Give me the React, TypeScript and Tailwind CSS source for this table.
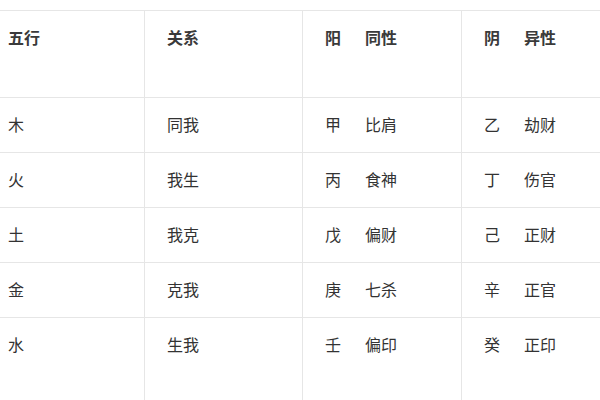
import React from "react";

const rows = [
  { el: "木", rel: "同我", yang: "甲", yangName: "比肩", yin: "乙", yinName: "劫财" },
  { el: "火", rel: "我生", yang: "丙", yangName: "食神", yin: "丁", yinName: "伤官" },
  { el: "土", rel: "我克", yang: "戊", yangName: "偏财", yin: "己", yinName: "正财" },
  { el: "金", rel: "克我", yang: "庚", yangName: "七杀", yin: "辛", yinName: "正官" },
  { el: "水", rel: "生我", yang: "壬", yangName: "偏印", yin: "癸", yinName: "正印" },
];

function Cell({ children, className = "" }: { children: React.ReactNode; className?: string }) {
  return (
    <div className={`border-r border-b border-[#e6e6e6] pl-[22px] pt-[16px] leading-[20px] ${className}`}>
      {children}
    </div>
  );
}

function Pair({ a, b }: { a: string; b: string }) {
  return (
    <div className="flex">
      <span className="w-[40px]">{a}</span>
      <span>{b}</span>
    </div>
  );
}

export default function App() {
  return (
    <div
      className="h-[400px] w-[600px] overflow-hidden bg-white text-[16px] text-[#333]"
      style={{ fontFamily: '"Noto Sans CJK SC", "Noto Sans", sans-serif' }}
    >
      <div className="mt-[10px] ml-[-14px] grid w-[636px] grid-cols-[159px_158px_159px_160px] border-t border-[#e6e6e6]">
        <Cell className="h-[87px] font-bold text-[#3a3a3a]">五行</Cell>
        <Cell className="h-[87px] font-bold text-[#3a3a3a]">关系</Cell>
        <Cell className="h-[87px] font-bold text-[#3a3a3a]">
          <Pair a="阳" b="同性" />
        </Cell>
        <Cell className="h-[87px] font-bold text-[#3a3a3a]">
          <Pair a="阴" b="异性" />
        </Cell>
        {rows.map((r, i) => {
          const h = i === rows.length - 1 ? "h-[100px]" : "h-[55px]";
          return (
            <React.Fragment key={r.el}>
              <Cell className={h}>{r.el}</Cell>
              <Cell className={h}>{r.rel}</Cell>
              <Cell className={h}>
                <Pair a={r.yang} b={r.yangName} />
              </Cell>
              <Cell className={h}>
                <Pair a={r.yin} b={r.yinName} />
              </Cell>
            </React.Fragment>
          );
        })}
      </div>
    </div>
  );
}
